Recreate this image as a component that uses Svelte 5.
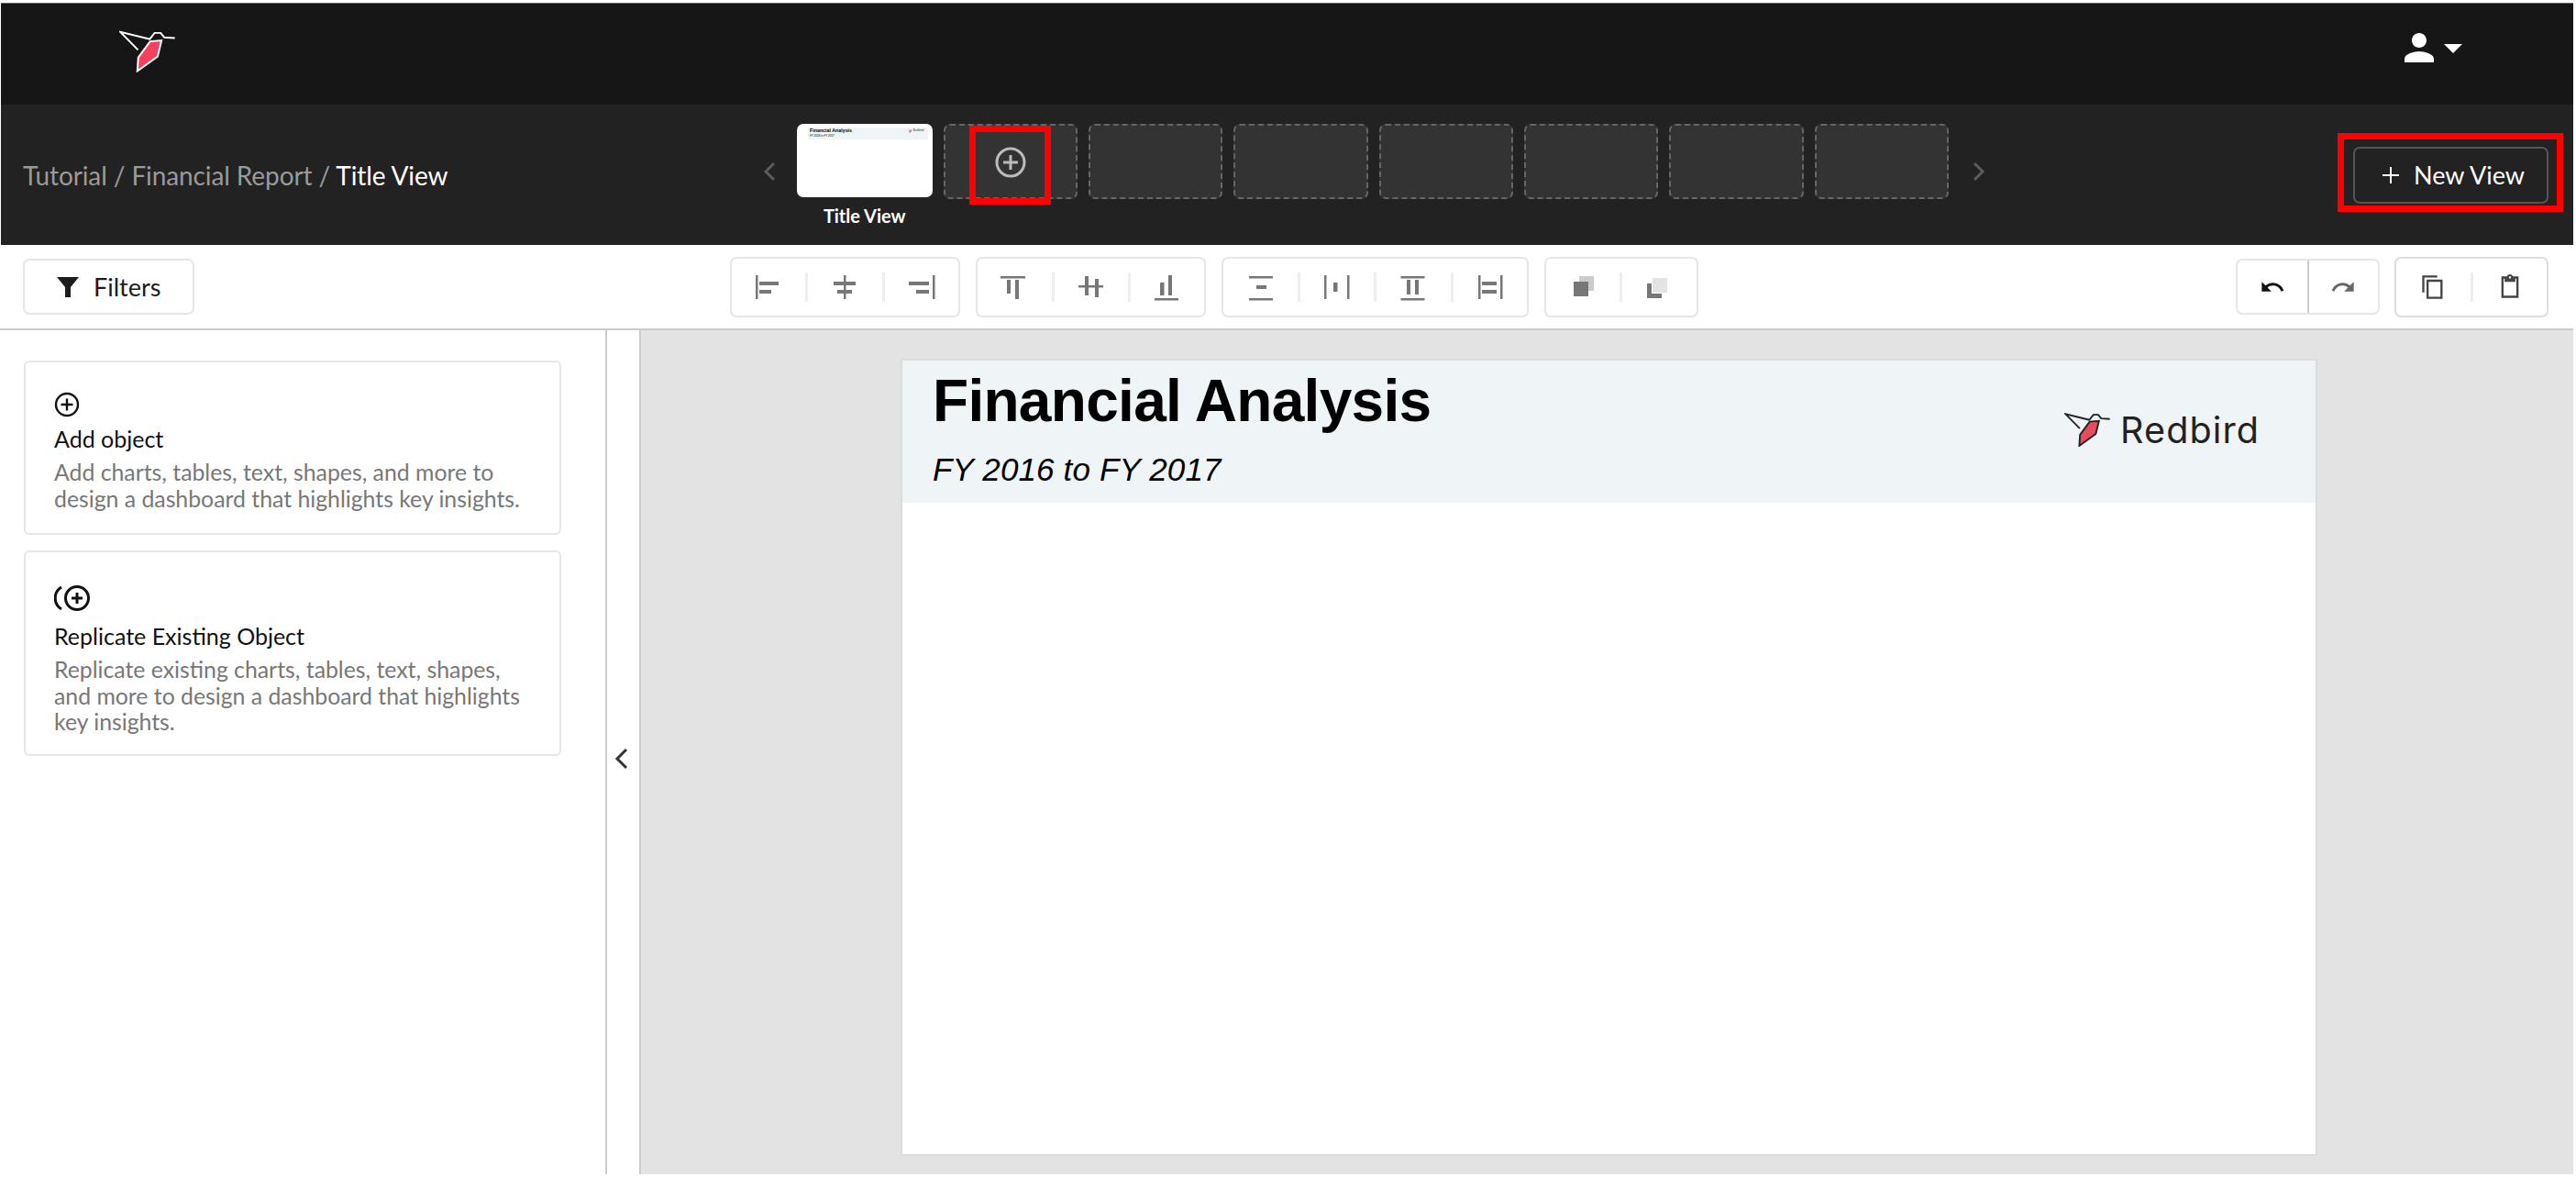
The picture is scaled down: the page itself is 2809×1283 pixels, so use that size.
<script lang="ts">
	// each toolbar icon is a list of rects in a 30x30 box: x, y, w, h, fill
	const D = '#777';
	const groups = [
		[
			[[1, 2, 2.5, 26], [5, 9, 21, 4], [5, 18, 13, 4]],
			[[13, 2, 2.5, 26], [2, 9, 24, 4], [6, 18, 16, 4]],
			[[27, 2, 2.5, 26], [1, 9, 22, 4], [9, 18, 14, 4]]
		],
		[
			[[0, 3, 27, 2.5], [7, 7, 4, 15], [16, 7, 4, 21]],
			[[1, 13, 27, 2.5], [8, 3, 4, 21], [19, 6, 4, 20]],
			[[1, 27, 26, 2.5], [7, 10, 4.5, 14], [16, 2, 4, 22]]
		],
		[
			[[2, 3, 26, 2.5], [2, 27, 26, 2.5], [10, 13, 11, 4]],
			[[1, 2, 2.5, 26], [26, 2, 2.5, 26], [11, 10, 4.5, 10]],
			[[1.5, 3, 26, 2.5], [1.5, 27, 26, 2.5], [8, 7, 4, 16], [17, 7, 4, 16]],
			[[2, 2, 2.5, 26], [26, 2, 2.5, 26], [6, 9, 16, 4], [6, 18, 16, 4]]
		],
		[
			[[11, 3, 16, 16, '#ccc'], [5, 9, 16, 16, D]],
			[[2, 11, 16, 16, D], [7, 4, 18, 18, '#fff'], [8, 5, 16, 16, '#e3e3e3']]
		]
	];
	const slots = [1, 2, 3, 4, 5, 6];
</script>

{#snippet bird(line, fill, cls)}
	<svg class={cls} viewBox="88 66 188 138">
		<path d="M190 95 L92 71 L150 130" fill="none" stroke={line} />
		<path d="M188 96 L205 74 L225 74 L237 89 L272 91" fill="none" stroke={line} />
		<path d="M190 102 L228 99 L215 152 L148 200 L151 155 Z" fill={fill} stroke={line} />
	</svg>
{/snippet}

<div class="app">
	<header class="topbar">
		{@render bird('#fff', '#f5405f', 'top-logo')}
		<div class="user">
			<svg class="user-icon" viewBox="0 0 24 24" fill="#fff">
				<path d="M12 12c2.21 0 4-1.79 4-4s-1.79-4-4-4-4 1.79-4 4 1.79 4 4 4zm0 2c-2.67 0-8 1.34-8 4v2h16v-2c0-2.66-5.33-4-8-4z" />
			</svg>
			<span class="caret"></span>
		</div>
	</header>

	<div class="subbar">
		<div class="crumbs">Tutorial / Financial Report / <span class="crumb-current">Title View</span></div>
		<div class="strip">
			<svg class="chev" viewBox="0 0 14 22"><path d="M12 2 L3 11 L12 20" /></svg>
			<div class="thumb-wrap">
				<div class="thumb">
					<div class="thumb-band">
						<div>
							<div class="thumb-title">Financial Analysis</div>
							<div class="thumb-sub">FY 2016 to FY 2017</div>
						</div>
						<div class="thumb-brand">
							{@render bird('#222', '#e64c5e', 'thumb-logo')}
							Redbird
						</div>
					</div>
				</div>
				<div class="thumb-label">Title View</div>
			</div>
			<div class="slot slot-add">
				<svg class="slot-plus" viewBox="0 0 34 34" fill="none" stroke="#bbb" stroke-width="3">
					<circle cx="17" cy="17" r="15" />
					<path d="M17 9 V25 M9 17 H25" />
				</svg>
				<span class="mark mark-add"></span>
			</div>
			{#each slots as s (s)}
				<div class="slot"></div>
			{/each}
			<svg class="chev" viewBox="0 0 14 22"><path d="M2 2 L11 11 L2 20" /></svg>
		</div>
		<div class="new-wrap">
			<button class="new-view">
				<svg class="new-plus" viewBox="0 0 20 20" stroke="#fff" stroke-width="2"><path d="M10 1 V19 M1 10 H19" /></svg>
				New View
			</button>
			<span class="mark mark-new"></span>
		</div>
	</div>

	<div class="toolbar">
		<button class="filters">
			<svg class="filter-icon" viewBox="0 0 24 22" fill="#1c1c1c"><path d="M0 0 H24 L15 11 V22 H9 V11 Z" /></svg>
			Filters
		</button>
		<div class="tool-groups">
			{#each groups as group}
				<div class="tool-group">
					{#each group as icon, i}
						{#if i > 0}<span class="divider"></span>{/if}
						<span class="tool">
							<svg class="tool-icon" viewBox="0 0 30 30">
								{#each icon as r}
									<rect x={r[0]} y={r[1]} width={r[2]} height={r[3]} fill={r[4] ?? D} />
								{/each}
							</svg>
						</span>
					{/each}
				</div>
			{/each}
		</div>
		<div class="history">
			<div class="undo-group">
				<span class="undo-cell undo-first">
					<svg class="hist-icon" viewBox="0 0 24 24" fill="#111"><path d="M12.5 8c-2.65 0-5.05.99-6.9 2.6L2 7v9h9l-3.62-3.62c1.39-1.16 3.16-1.88 5.12-1.88 3.54 0 6.55 2.31 7.6 5.5l2.37-.78C21.08 11.03 17.15 8 12.5 8z" /></svg>
				</span>
				<span class="undo-cell">
					<svg class="hist-icon" viewBox="0 0 24 24" fill="#666"><path d="M18.4 10.6C16.55 8.99 14.15 8 11.5 8c-4.65 0-8.58 3.03-9.96 7.22L3.9 16c1.05-3.19 4.05-5.5 7.6-5.5 1.95 0 3.73.72 5.12 1.88L13 16h9V7l-3.6 3.6z" /></svg>
				</span>
			</div>
			<div class="clip-group">
				<span class="clip-cell">
					<svg class="hist-icon" viewBox="0 0 24 24" fill="#444"><path fill-rule="evenodd" d="M16 1H2v16h2V3h12zM21 5H6v18h15zM19 21H8V7h11z" /></svg>
				</span>
				<span class="divider"></span>
				<span class="clip-cell">
					<svg class="hist-icon" viewBox="0 0 24 24" fill="#444"><path d="M19 2h-4.18C14.4.84 13.3 0 12 0c-1.3 0-2.4.84-2.82 2H4v20h16V2zm-7 0c.55 0 1 .45 1 1s-.45 1-1 1-1-.45-1-1 .45-1 1-1zm6 18H6V4h1v3h10V4h1z" /></svg>
				</span>
			</div>
		</div>
	</div>

	<div class="workspace">
		<aside class="sidebar">
			<div class="card card-add">
				<svg class="card-icon" viewBox="0 0 28 28" fill="none" stroke="#111" stroke-width="2.4">
					<circle cx="14" cy="14" r="12" />
					<path d="M14 7.5 V20.5 M7.5 14 H20.5" />
				</svg>
				<div class="card-title">Add object</div>
				<p class="card-desc">Add charts, tables, text, shapes, and more to design a dashboard that highlights key insights.</p>
			</div>
			<div class="card card-replicate">
				<svg class="card-icon-wide" viewBox="0 0 40 28" fill="none" stroke="#111" stroke-width="3">
					<circle cx="25" cy="14" r="12.5" />
					<path d="M25 8 V20 M19 14 H31" />
					<path d="M8 2 A14 14 0 0 0 8 26" />
				</svg>
				<div class="card-title">Replicate Existing Object</div>
				<p class="card-desc">Replicate existing charts, tables, text, shapes, and more to design a dashboard that highlights key insights.</p>
			</div>
		</aside>
		<div class="collapse">
			<svg class="collapse-icon" viewBox="0 0 16 24" fill="none" stroke="#333" stroke-width="3"><path d="M14 2 L4 12 L14 22" /></svg>
		</div>
		<main class="canvas">
			<div class="page">
				<div class="band">
					<div>
						<h1 class="page-title">Financial Analysis</h1>
						<div class="page-sub">FY 2016 to FY 2017</div>
					</div>
					<div class="brand">
						{@render bird('#222', '#e64c5e', 'brand-logo')}
						<span class="brand-name">Redbird</span>
					</div>
				</div>
			</div>
		</main>
	</div>
</div>

<style>
	:global(body) {
		margin: 0;
		background: #fff;
	}

	.app {
		height: 1280px;
		margin-right: 3px;
		padding-top: 3px;
		box-sizing: border-box;
		display: flex;
		flex-direction: column;
		font-family: 'Lato', sans-serif;
		overflow: hidden;
	}

	.topbar {
		height: 111px;
		flex: none;
		margin-left: 1px;
		background: #161616;
		border-top: 1px solid #666;
		box-sizing: border-box;
		display: flex;
		justify-content: space-between;
	}

	:global(.top-logo) {
		width: 62px;
		height: 46px;
		margin: 29px 0 0 129px;
		stroke-width: 6;
	}

	.user {
		display: flex;
		align-items: flex-start;
		margin: 24px 121px 0 0;
	}

	.user-icon {
		width: 48px;
		height: 48px;
	}

	.caret {
		margin: 20px 0 0 3px;
		border-left: 10px solid transparent;
		border-right: 10px solid transparent;
		border-top: 10px solid #fff;
	}

	.subbar {
		height: 153px;
		flex: none;
		margin-left: 1px;
		background: #222;
		display: flex;
		align-items: center;
	}

	.crumbs {
		width: 806px;
		flex: none;
		padding-left: 24px;
		box-sizing: border-box;
		font-size: 28px;
		letter-spacing: -0.1px;
		color: #9a9a9a;
		white-space: nowrap;
	}

	.crumb-current {
		color: #fff;
	}

	.strip {
		align-self: flex-start;
		display: flex;
		gap: 12px;
		margin-top: 21px;
	}

	.chev {
		width: 14px;
		height: 22px;
		margin-top: 41px;
		fill: none;
		stroke: #5c5c5c;
		stroke-width: 3;
	}

	.strip > .chev:first-child {
		margin-right: 11px;
		margin-left: 25px;
	}

	.strip > .chev:last-child {
		margin-left: 14px;
	}

	.thumb-wrap {
		width: 147.5px;
	}

	.thumb {
		height: 80px;
		background: #fff;
		border-radius: 7px;
		padding: 4px 5px 0 12px;
		box-sizing: border-box;
	}

	.thumb-band {
		height: 13px;
		background: #eff4f7;
		display: flex;
		justify-content: space-between;
		padding-left: 2px;
	}

	.thumb-title {
		font-family: 'Liberation Sans', sans-serif;
		font-weight: 700;
		font-size: 5.3px;
		color: #000;
		line-height: 7px;
	}

	.thumb-sub {
		font-family: 'Liberation Sans', sans-serif;
		font-style: italic;
		font-size: 3px;
		color: #000;
		line-height: 4px;
	}

	.thumb-brand {
		display: flex;
		align-items: flex-start;
		gap: 1px;
		font-size: 3.5px;
		line-height: 7px;
		color: #333;
		padding-right: 4px;
	}

	:global(.thumb-logo) {
		width: 5px;
		height: 4px;
		margin-top: 2px;
		stroke-width: 6;
	}

	.thumb-label {
		margin-top: 8px;
		text-align: center;
		font-weight: 700;
		font-size: 20px;
		line-height: 24px;
		color: #fff;
		white-space: nowrap;
	}

	.slot {
		position: relative;
		width: 146.4px;
		height: 82px;
		box-sizing: border-box;
		background: #333;
		border: 2px dashed #666;
		border-radius: 7px;
	}

	.slot-add {
		display: flex;
		justify-content: center;
		padding-top: 23px;
	}

	.slot-plus {
		width: 34px;
		height: 34px;
	}

	/* red highlight rectangles from the tutorial screenshot */
	.mark {
		position: absolute;
		box-sizing: border-box;
		border: 7px solid #f00;
	}

	.mark-add {
		left: 26px;
		top: 0;
		width: 89px;
		height: 86px;
	}

	.new-wrap {
		position: relative;
		margin-left: auto;
		margin-right: 27px;
	}

	.mark-new {
		left: -17px;
		top: -15px;
		width: 246px;
		height: 86px;
	}

	.new-view {
		width: 213px;
		height: 62px;
		box-sizing: border-box;
		display: flex;
		align-items: center;
		gap: 15px;
		padding: 0 0 0 29px;
		background: #222;
		border: 2px solid #555;
		border-radius: 7px;
		color: #fff;
		font-family: inherit;
		font-size: 27px;
		white-space: nowrap;
	}

	.new-plus {
		width: 20px;
		height: 20px;
		flex: none;
	}

	.toolbar {
		height: 93px;
		flex: none;
		box-sizing: border-box;
		display: flex;
		align-items: center;
		padding: 0 27px 0 25px;
		border-bottom: 2px solid #ccc;
	}

	.filters {
		width: 187px;
		height: 61px;
		box-sizing: border-box;
		display: flex;
		align-items: center;
		gap: 16px;
		padding: 0 0 0 35px;
		background: #fff;
		border: 2px solid #e6e6e6;
		border-radius: 7px;
		font-family: inherit;
		font-size: 27px;
		color: #1c1c1c;
	}

	.filter-icon {
		width: 24px;
		height: 22px;
		flex: none;
	}

	.tool-groups {
		display: flex;
		gap: 17px;
		margin-left: 584px;
	}

	.tool-group {
		height: 66px;
		box-sizing: border-box;
		display: flex;
		align-items: center;
		border: 2px solid #e6e6e6;
		border-radius: 7px;
	}

	.tool {
		width: 80.4px;
		display: flex;
		justify-content: center;
	}

	.tool-icon {
		width: 30px;
		height: 30px;
	}

	.divider {
		width: 3px;
		height: 32px;
		flex: none;
		background: #eee;
	}

	.history {
		display: flex;
		align-items: center;
		gap: 16px;
		margin-left: auto;
	}

	.undo-group {
		width: 157px;
		height: 61px;
		box-sizing: border-box;
		display: flex;
		border: 2px solid #e6e6e6;
		border-radius: 7px;
	}

	.undo-cell {
		flex: 1;
		display: flex;
		align-items: center;
		justify-content: center;
	}

	.undo-first {
		border-right: 2px solid #ccc;
	}

	.clip-group {
		width: 168px;
		height: 66px;
		box-sizing: border-box;
		display: flex;
		align-items: center;
		border: 2px solid #ddd;
		border-radius: 7px;
	}

	.clip-cell {
		flex: 1;
		display: flex;
		justify-content: center;
	}

	.hist-icon {
		width: 28px;
		height: 28px;
	}

	.workspace {
		flex: 1;
		min-height: 0;
		display: flex;
	}

	.sidebar {
		width: 662px;
		flex: none;
		box-sizing: border-box;
		padding: 33px 48px 0 26px;
		border-right: 2px solid #ccc;
		display: flex;
		flex-direction: column;
		gap: 17px;
	}

	.card {
		box-sizing: border-box;
		border: 2px solid #e6e6e6;
		border-radius: 6px;
		padding: 32px 30px 0 31px;
	}

	.card-add {
		height: 190px;
	}

	.card-replicate {
		height: 224px;
		padding-top: 36px;
	}

	.card-icon {
		display: block;
		width: 28px;
		height: 28px;
	}

	.card-icon-wide {
		display: block;
		width: 40px;
		height: 28px;
	}

	.card-title {
		margin-top: 8px;
		font-size: 25px;
		line-height: 30px;
		color: #111;
	}

	.card-replicate .card-title {
		margin-top: 12px;
	}

	.card-desc {
		margin: 8px 0 0;
		font-size: 24.8px;
		line-height: 28.5px;
		color: #777;
	}

	.collapse {
		width: 35px;
		flex: none;
		box-sizing: border-box;
		padding: 14px 5px 0 0;
		display: flex;
		align-items: center;
		justify-content: center;
	}

	.collapse-icon {
		width: 16px;
		height: 24px;
	}

	.canvas {
		flex: 1;
		min-width: 0;
		box-sizing: border-box;
		background: #e3e3e3;
		border-left: 2px solid #ccc;
		padding: 31px 279px 20px 283px;
	}

	.page {
		height: 100%;
		box-sizing: border-box;
		background: #fff;
		border: 2px solid #dcdcdc;
	}

	.band {
		height: 155px;
		background: #eff4f7;
		display: flex;
		justify-content: space-between;
		padding-left: 33px;
		font-family: 'Liberation Sans', sans-serif;
		color: #000;
	}

	.page-title {
		margin: 0;
		padding-top: 7px;
		font-size: 64px;
		letter-spacing: -0.7px;
		line-height: 75px;
		font-weight: 700;
		white-space: nowrap;
	}

	.page-sub {
		margin-top: 17px;
		font-size: 35px;
		letter-spacing: 0.15px;
		line-height: 40px;
		font-style: italic;
		white-space: nowrap;
	}

	.brand {
		display: flex;
		align-items: center;
		gap: 10px;
		margin: 0 61px 0 0;
		padding-bottom: 4px;
	}

	:global(.brand-logo) {
		width: 51px;
		height: 37px;
		stroke-width: 7;
	}

	.brand-name {
		font-family: 'Inter', sans-serif;
		font-size: 39.5px;
		letter-spacing: 1.1px;
		color: #222;
	}
</style>
